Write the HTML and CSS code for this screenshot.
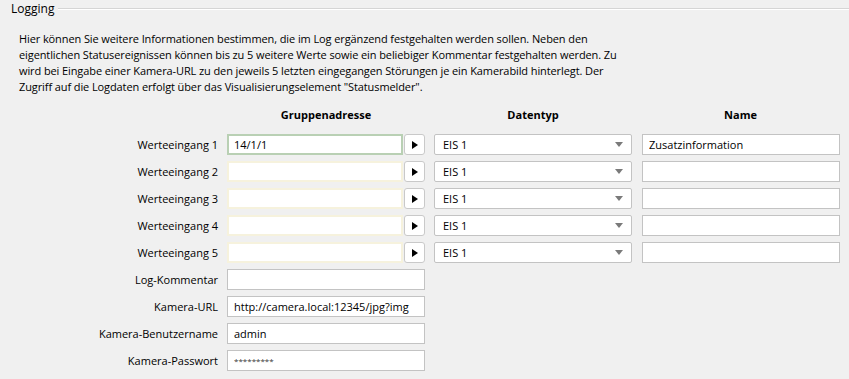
FILE: index.html
```html
<!DOCTYPE html>
<html lang="de">
<head>
    <meta charset="UTF-8">
    <title>Logging</title>
    <link rel="stylesheet" href="styles.css">
</head>
<body>
    <div class="group-title">
        <span class="legend">Logging</span>
        <span class="line"></span>
    </div>

    <p class="intro">
        Hier können Sie weitere Informationen bestimmen, die im Log ergänzend festgehalten werden sollen. Neben den<br>
        eigentlichen Statusereignissen können bis zu 5 weitere Werte sowie ein beliebiger Kommentar festgehalten werden. Zu<br>
        wird bei Eingabe einer Kamera-URL zu den jeweils 5 letzten eingegangen Störungen je ein Kamerabild hinterlegt. Der<br>
        Zugriff auf die Logdaten erfolgt über das Visualisierungselement "Statusmelder".
    </p>

    <div class="log-form">
        <span></span>
        <span class="col-head">Gruppenadresse</span>
        <span class="col-head">Datentyp</span>
        <span class="col-head name-col">Name</span>

        <label>Werteeingang 1</label>
        <div class="ga"><input type="text" class="ga-input active" value="14/1/1"><button class="pick"><svg width="6" height="8" viewBox="0 0 6 8"><polygon points="0,0 6,4 0,8" fill="#000"/></svg></button></div>
        <div class="select"><span>EIS 1</span><svg width="8" height="5" viewBox="0 0 8 5"><polygon points="0,0 8,0 4,5" fill="#7a7a7a"/></svg></div>
        <input type="text" class="field name-col" value="Zusatzinformation">

        <label>Werteeingang 2</label>
        <div class="ga"><input type="text" class="ga-input" value=""><button class="pick"><svg width="6" height="8" viewBox="0 0 6 8"><polygon points="0,0 6,4 0,8" fill="#000"/></svg></button></div>
        <div class="select"><span>EIS 1</span><svg width="8" height="5" viewBox="0 0 8 5"><polygon points="0,0 8,0 4,5" fill="#7a7a7a"/></svg></div>
        <input type="text" class="field name-col" value="">

        <label>Werteeingang 3</label>
        <div class="ga"><input type="text" class="ga-input" value=""><button class="pick"><svg width="6" height="8" viewBox="0 0 6 8"><polygon points="0,0 6,4 0,8" fill="#000"/></svg></button></div>
        <div class="select"><span>EIS 1</span><svg width="8" height="5" viewBox="0 0 8 5"><polygon points="0,0 8,0 4,5" fill="#7a7a7a"/></svg></div>
        <input type="text" class="field name-col" value="">

        <label>Werteeingang 4</label>
        <div class="ga"><input type="text" class="ga-input" value=""><button class="pick"><svg width="6" height="8" viewBox="0 0 6 8"><polygon points="0,0 6,4 0,8" fill="#000"/></svg></button></div>
        <div class="select"><span>EIS 1</span><svg width="8" height="5" viewBox="0 0 8 5"><polygon points="0,0 8,0 4,5" fill="#7a7a7a"/></svg></div>
        <input type="text" class="field name-col" value="">

        <label>Werteeingang 5</label>
        <div class="ga"><input type="text" class="ga-input" value=""><button class="pick"><svg width="6" height="8" viewBox="0 0 6 8"><polygon points="0,0 6,4 0,8" fill="#000"/></svg></button></div>
        <div class="select"><span>EIS 1</span><svg width="8" height="5" viewBox="0 0 8 5"><polygon points="0,0 8,0 4,5" fill="#7a7a7a"/></svg></div>
        <input type="text" class="field name-col" value="">

        <label class="wide">Log-Kommentar</label>
        <input type="text" class="field" value="">
        <span></span><span></span>

        <label class="wide">Kamera-URL</label>
        <input type="text" class="field" value="http://camera.local:12345/jpg?img">
        <span></span><span></span>

        <label class="wide">Kamera-Benutzername</label>
        <input type="text" class="field" value="admin">
        <span></span><span></span>

        <label class="wide">Kamera-Passwort</label>
        <input type="text" class="field pw" value="*********">
        <span></span><span></span>
    </div>
</body>
</html>
```

FILE: styles.css
```css
body {
    font-family: "Open Sans", "Noto Sans", sans-serif;
    font-size: 11px;
    background-color: #f0f0f0;
    color: #000;
    margin: 0;
    padding: 0;
}

.group-title {
    display: flex;
    align-items: center;
    height: 17px;
}

.legend {
    margin-left: 8px;
    padding: 0 4px 0 3px;
    font-size: 12px;
}

.line {
    flex: 1;
    border-top: 1px solid #d5d5d5;
    border-bottom: 1px solid #fff;
}

.intro {
    margin: 14px 0 0 19px;
    line-height: 16px;
    letter-spacing: -0.1px;
}

.log-form {
    display: grid;
    grid-template-columns: 218px 198px 198px 198px;
    grid-template-rows: 24px;
    grid-auto-rows: 21px;
    column-gap: 9px;
    row-gap: 6px;
    margin-top: 9px;
    align-items: center;
}

.log-form label {
    text-align: right;
}

.col-head {
    font-weight: bold;
    text-align: center;
    align-self: start;
    margin-top: 3px;
}

.name-col {
    margin-left: 1px;
}

.ga {
    display: flex;
    gap: 1px;
    height: 21px;
}

input {
    font-family: inherit;
    font-size: 11px;
    color: #000;
    box-sizing: border-box;
    height: 21px;
    margin: 0;
    outline: none;
}

.ga-input {
    width: 176px;
    background: #fff;
    border: 2px solid #f6f2dd;
    padding: 0 5px;
}

.ga-input.active {
    border-color: #b9d0b4;
}

.pick {
    width: 21px;
    height: 21px;
    padding: 0;
    background: #fff;
    border: 1px solid #c9c9c9;
    border-radius: 3px;
    display: flex;
    align-items: center;
    justify-content: center;
}

.select {
    height: 21px;
    box-sizing: border-box;
    background: #fff;
    border: 1px solid #c3c3c3;
    border-radius: 2px;
    display: flex;
    align-items: center;
    justify-content: space-between;
    padding: 0 8px 0 8px;
}

.field {
    width: 198px;
    background: #fff;
    border: 1px solid #c3c3c3;
    padding: 0 6px;
}

.pw {
    font-size: 8px;
    color: #333;
}
```
